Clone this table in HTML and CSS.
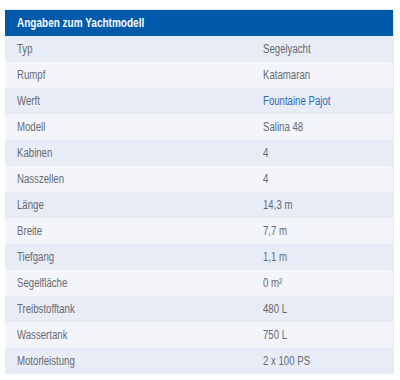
FILE: index.html
```html
<!DOCTYPE html>
<html lang="de">
<head>
<meta charset="utf-8">
<link rel="stylesheet" href="styles.css">
</head>
<body>
<div class="card">
  <div class="head"><span class="t">Angaben zum Yachtmodell</span></div>
  <div class="row"><span class="k t">Typ</span><span class="v t">Segelyacht</span></div>
  <div class="row"><span class="k t">Rumpf</span><span class="v t">Katamaran</span></div>
  <div class="row"><span class="k t">Werft</span><span class="v t link">Fountaine Pajot</span></div>
  <div class="row"><span class="k t">Modell</span><span class="v t">Salina 48</span></div>
  <div class="row"><span class="k t">Kabinen</span><span class="v t">4</span></div>
  <div class="row"><span class="k t">Nasszellen</span><span class="v t">4</span></div>
  <div class="row"><span class="k t">Länge</span><span class="v t">14,3 m</span></div>
  <div class="row"><span class="k t">Breite</span><span class="v t">7,7 m</span></div>
  <div class="row"><span class="k t">Tiefgang</span><span class="v t">1,1 m</span></div>
  <div class="row"><span class="k t">Segelfläche</span><span class="v t">0 m²</span></div>
  <div class="row"><span class="k t">Treibstofftank</span><span class="v t">480 L</span></div>
  <div class="row"><span class="k t">Wassertank</span><span class="v t">750 L</span></div>
  <div class="row"><span class="k t">Motorleistung</span><span class="v t">2 x 100 PS</span></div>
</div>
</body>
</html>
```
FILE: styles.css
```css
html, body { margin: 0; padding: 0; background: #ffffff; }
body {
  font-family: "Liberation Sans", Arial, sans-serif;
  padding: 9px 6px 0 5px;
}
.card {
  border-top: 1px solid #e3e8f2;
  border-right: 1px solid #e3e8f2;
}
.head {
  background: #005aaa;
  color: #ffffff;
  font-weight: bold;
  font-size: 13px;
  height: 26px;
  line-height: 26px;
  padding-left: 12px;
}
.row {
  display: grid;
  grid-template-columns: 258px 1fr;
  height: 26px;
  line-height: 26px;
  font-size: 12.5px;
  color: #666a70;
  background: #f3f5fb;
}
.row:nth-child(even) { background: #e8ecf6; }
.t {
  display: inline-block;
  justify-self: start;
  transform: scaleX(0.77);
  transform-origin: left center;
  white-space: nowrap;
}
.k { margin-left: 12px; }
.link { color: #2b6cb8; }
```
